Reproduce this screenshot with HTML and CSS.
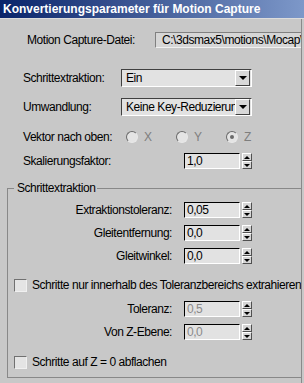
FILE: index.html
```html
<!DOCTYPE html>
<html lang="de">
<head>
    <meta charset="UTF-8">
    <title>Konvertierungsparameter für Motion Capture</title>
    <link rel="stylesheet" href="styles.css">
</head>
<body>
<div class="dialog">
    <div class="titlebar">Konvertierungsparameter für Motion Capture</div>

    <div class="inhalt">
        <div class="zeile datei-zeile">
            <span class="lbl">Motion Capture-Datei:</span>
            <div class="feld">C:\3dsmax5\motions\Mocap\Lauf01.csm</div>
        </div>

        <div class="zeile combo-zeile">
            <span class="lbl">Schrittextraktion:</span>
            <div class="combo">
                <span class="combo-text">Ein</span>
                <span class="combo-btn"><span class="pfeil-ab"></span></span>
            </div>
        </div>

        <div class="zeile combo-zeile zweite">
            <span class="lbl">Umwandlung:</span>
            <div class="combo">
                <span class="combo-text">Keine Key-Reduzierung</span>
                <span class="combo-btn"><span class="pfeil-ab"></span></span>
            </div>
        </div>

        <div class="zeile radio-zeile">
            <span class="lbl">Vektor nach oben:</span>
            <label class="radio"><span class="kreis"></span>X</label>
            <label class="radio"><span class="kreis"></span>Y</label>
            <label class="radio"><span class="kreis an"></span>Z</label>
        </div>

        <div class="zeile spin-zeile oben">
            <span class="lbl">Skalierungsfaktor:</span>
            <div class="spinner">
                <div class="spin-feld">1,0</div>
                <div class="spin-btns"><span class="hoch"></span><span class="runter"></span></div>
            </div>
        </div>

        <fieldset class="gruppe">
            <legend>Schrittextraktion</legend>

            <div class="spin-zeile">
                <span class="rlbl">Extraktionstoleranz:</span>
                <div class="spinner">
                    <div class="spin-feld">0,05</div>
                    <div class="spin-btns"><span class="hoch"></span><span class="runter"></span></div>
                </div>
            </div>
            <div class="spin-zeile">
                <span class="rlbl">Gleitentfernung:</span>
                <div class="spinner">
                    <div class="spin-feld">0,0</div>
                    <div class="spin-btns"><span class="hoch"></span><span class="runter"></span></div>
                </div>
            </div>
            <div class="spin-zeile">
                <span class="rlbl">Gleitwinkel:</span>
                <div class="spinner">
                    <div class="spin-feld">0,0</div>
                    <div class="spin-btns"><span class="hoch"></span><span class="runter"></span></div>
                </div>
            </div>

            <label class="check erste"><span class="kasten"></span>Schritte nur innerhalb des Toleranzbereichs extrahieren</label>

            <div class="spin-zeile tol">
                <span class="rlbl">Toleranz:</span>
                <div class="spinner aus">
                    <div class="spin-feld">0,5</div>
                    <div class="spin-btns"><span class="hoch"></span><span class="runter"></span></div>
                </div>
            </div>
            <div class="spin-zeile">
                <span class="rlbl">Von Z-Ebene:</span>
                <div class="spinner aus">
                    <div class="spin-feld">0,0</div>
                    <div class="spin-btns"><span class="hoch"></span><span class="runter"></span></div>
                </div>
            </div>

            <label class="check zweite"><span class="kasten"></span>Schritte auf Z = 0 abflachen</label>
        </fieldset>
    </div>
</div>
</body>
</html>
```

FILE: styles.css
```css
html, body {
    margin: 0;
    background: #c8c8c8;
}

body {
    font-family: "Liberation Sans", Arial, sans-serif;
    font-size: 12px;
    letter-spacing: -0.45px;
    color: #000;
}

.dialog {
    width: 304px;
    height: 383px;
    overflow: hidden;
    background: #c8c8c8;
}

/* Titelleiste */
.titlebar {
    height: 18px;
    line-height: 18px;
    padding-left: 3px;
    border-bottom: 1px solid #dcdcdc;
    background: linear-gradient(to right, #0a246a, #7d98c9);
    color: #fff;
    font-weight: bold;
    font-size: 12px;
    letter-spacing: 0;
    white-space: nowrap;
}

.inhalt {
    width: 301px;
    height: 364px;
    border-right: 1px solid #8a8a8a;
    overflow: hidden;
}

.zeile {
    display: flex;
    align-items: center;
    padding-left: 23px;
    white-space: nowrap;
}

.zeile .lbl {
    width: 98px;
    flex: none;
}

/* Dateifeld */
.datei-zeile {
    margin-top: 13px;
    height: 16px;
    padding-left: 27px;
}

.datei-zeile .lbl {
    width: 128px;
}

.feld {
    flex: none;
    width: 200px;
    height: 14px;
    line-height: 14px;
    padding-left: 6px;
    background: #d6d6d6;
    border-top: 1px solid #808080;
    border-left: 1px solid #808080;
    border-bottom: 1px solid #f0f0f0;
}

/* Combobox */
.combo-zeile {
    margin-top: 21px;
    height: 18px;
}

.combo-zeile.zweite {
    margin-top: 11px;
}

.combo {
    flex: none;
    display: flex;
    width: 129px;
    height: 16px;
    background: #e2e2e2;
    border-top: 1px solid #404040;
    border-left: 1px solid #404040;
    border-right: 1px solid #fff;
    border-bottom: 1px solid #fff;
}

.combo-text {
    flex: 1;
    overflow: hidden;
    padding-left: 4px;
    line-height: 16px;
}

.combo-btn {
    flex: none;
    width: 13px;
    height: 14px;
    margin: 0 1px 0 0;
    background: #d8d8d8;
    border-top: 1px solid #fff;
    border-left: 1px solid #fff;
    border-right: 1px solid #404040;
    border-bottom: 1px solid #404040;
    display: flex;
    align-items: center;
    justify-content: center;
}

.pfeil-ab {
    width: 0;
    height: 0;
    border-left: 4px solid transparent;
    border-right: 4px solid transparent;
    border-top: 4px solid #000;
}

/* Radiobuttons */
.radio-zeile {
    margin-top: 14px;
    height: 14px;
}

.radio {
    display: flex;
    align-items: center;
    color: #7e7e7e;
    width: 50px;
    flex: none;
}

.radio:first-of-type {
    margin-left: 5px;
}

.kreis {
    width: 10px;
    height: 10px;
    border-radius: 50%;
    background: #e4e4e4;
    border: 1px solid;
    border-color: #6a6a6a #e8e8e8 #e8e8e8 #6a6a6a;
    margin-right: 6px;
    position: relative;
}

.kreis.an::after {
    content: "";
    position: absolute;
    left: 3px;
    top: 3px;
    width: 4px;
    height: 4px;
    border-radius: 50%;
    background: #6a6a6a;
}

/* Spinner */
.spin-zeile {
    display: flex;
    align-items: center;
    height: 16px;
    white-space: nowrap;
}

.spin-zeile.oben {
    margin-top: 9px;
}

.spin-zeile.oben .lbl {
    width: 161px;
}

.spinner {
    display: flex;
    align-items: center;
    flex: none;
}

.spin-feld {
    width: 52px;
    height: 14px;
    line-height: 14px;
    padding-left: 2px;
    background: #e2e2e2;
    border-top: 1px solid #000;
    border-left: 1px solid #000;
    border-right: 1px solid #fff;
    border-bottom: 1px solid #fff;
}

.spinner.aus .spin-feld {
    color: #8a8a8a;
}

.spin-btns {
    margin-left: 2px;
    width: 10px;
    height: 16px;
    display: flex;
    flex-direction: column;
}

.spin-btns span {
    flex: 1;
    background: #d6d6d6;
    border-top: 1px solid #fff;
    border-left: 1px solid #fff;
    border-right: 1px solid #505050;
    border-bottom: 1px solid #505050;
    display: flex;
    align-items: center;
    justify-content: center;
}

.spin-btns .hoch::after {
    content: "";
    border-left: 3px solid transparent;
    border-right: 3px solid transparent;
    border-bottom: 3px solid #000;
}

.spin-btns .runter::after {
    content: "";
    border-left: 3px solid transparent;
    border-right: 3px solid transparent;
    border-top: 3px solid #000;
}

/* Gruppe Schrittextraktion */
.gruppe {
    margin: 12px 0 0 7px;
    padding: 7px 0 0 0;
    width: 291px;
    height: 197px;
    border: 1px solid #888;
    box-sizing: border-box;
}

.gruppe legend {
    margin-left: 6px;
    padding: 0 2px 0 3px;
    line-height: 14px;
}

.gruppe .spin-zeile + .spin-zeile {
    margin-top: 7px;
}

.rlbl {
    width: 164px;
    text-align: right;
    margin-right: 12px;
    flex: none;
}

.check {
    display: flex;
    align-items: center;
    white-space: nowrap;
    margin-left: 6px;
    height: 14px;
}

.check.erste {
    margin-top: 14px;
}

.spin-zeile.tol {
    margin-top: 9px;
}

.check.zweite {
    margin-top: 15px;
}

.kasten {
    width: 11px;
    height: 11px;
    margin-right: 5px;
    background: #e4e4e4;
    border: 1px solid;
    border-color: #707070 #f0f0f0 #f0f0f0 #707070;
}
```
